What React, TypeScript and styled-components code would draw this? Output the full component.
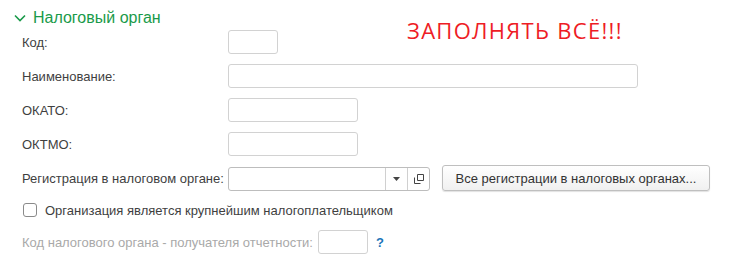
import styled, { createGlobalStyle } from 'styled-components';

const GlobalStyle = createGlobalStyle`
  body {
    margin: 0;
    background: #fff;
    font-family: 'Liberation Sans', Arial, sans-serif;
  }
`;

const Page = styled.div`
  position: relative;
  width: 739px;
  height: 265px;
  padding: 8px 0 0 14px;
  box-sizing: border-box;
`;

const GroupHeader = styled.div`
  display: flex;
  align-items: center;
  gap: 7px;
  height: 20px;
  color: #1a9a4a;
  font-size: 16px;
`;

const Note = styled.div`
  position: absolute;
  left: 407px;
  top: 15px;
  color: #ee1c25;
  font-family: 'Open Sans', sans-serif;
  font-size: 22px;
  letter-spacing: 1.3px;
`;

const Fields = styled.div`
  display: flex;
  flex-direction: column;
  gap: 10px;
  padding: 2px 0 0 8px;
`;

const Row = styled.div`
  display: flex;
  align-items: center;
  height: 24px;
`;

const Label = styled.div`
  width: 206px;
  flex-shrink: 0;
  font-size: 13px;
  color: #3f3f3f;
  white-space: nowrap;
`;

const Input = styled.div<{ $w: number }>`
  width: ${(p) => p.$w}px;
  height: 24px;
  box-sizing: border-box;
  border: 1px solid #d2d2d2;
  border-radius: 3px;
  background: #fff;
`;

const Combo = styled.div`
  display: flex;
  width: 202px;
  height: 24px;
  box-sizing: border-box;
  border: 1px solid #bdbdbd;
  border-radius: 3px;
  margin-top: 1px;
`;

const ComboText = styled.div`
  flex: 1;
`;

const ComboBtn = styled.div`
  width: 21px;
  display: flex;
  align-items: center;
  justify-content: center;
  border-left: 1px solid #d0d0d0;
`;

const Button = styled.div`
  margin-left: 12px;
  width: 268px;
  height: 26px;
  box-sizing: border-box;
  display: flex;
  align-items: center;
  justify-content: center;
  white-space: nowrap;
  border: 1px solid #bfbfbf;
  border-radius: 3px;
  background: linear-gradient(#ffffff, #f0f0f0);
  box-shadow: 0 1px 1px rgba(0, 0, 0, 0.12);
  font-size: 13px;
  color: #333;
`;

const CheckRow = styled.label`
  display: flex;
  align-items: center;
  gap: 8px;
  height: 24px;
  margin-top: -2px;
  padding-left: 1px;
  font-size: 13px;
  color: #3f3f3f;
`;

const Box = styled.span`
  width: 14px;
  height: 14px;
  box-sizing: border-box;
  border: 1px solid #8a8a8a;
  border-radius: 3px;
  background: #fff;
`;

const LastRow = styled.div`
  display: flex;
  align-items: center;
  gap: 5px;
  height: 24px;
  margin-top: -2px;
`;

const MutedText = styled.span`
  font-size: 13px;
  color: #a9a9a9;
`;

const Help = styled.span`
  margin-left: 3px;
  color: #1a74b9;
  font-weight: bold;
  font-size: 13px;
`;

export default function App() {
  return (
    <Page>
      <GlobalStyle />
      <GroupHeader>
        <svg width="12" height="8" viewBox="0 0 12 8">
          <path d="M1 1.5 L6 6.5 L11 1.5" fill="none" stroke="#1a9a4a" strokeWidth="1.6" />
        </svg>
        <span>Налоговый орган</span>
      </GroupHeader>
      <Note>ЗАПОЛНЯТЬ ВСЁ!!!</Note>
      <Fields>
        <Row>
          <Label>Код:</Label>
          <Input $w={50} />
        </Row>
        <Row>
          <Label>Наименование:</Label>
          <Input $w={410} />
        </Row>
        <Row>
          <Label>ОКАТО:</Label>
          <Input $w={130} />
        </Row>
        <Row>
          <Label>ОКТМО:</Label>
          <Input $w={130} />
        </Row>
        <Row>
          <Label>Регистрация в налоговом органе:</Label>
          <Combo>
            <ComboText />
            <ComboBtn>
              <svg width="7" height="4" viewBox="0 0 7 4">
                <path d="M0 0 H7 L3.5 4 Z" fill="#444" />
              </svg>
            </ComboBtn>
            <ComboBtn>
              <svg width="10" height="10" viewBox="0 0 10 10">
                <path d="M3.5 0.5 H9.5 V6.5 H3.5 Z M0.5 3.5 V9.5 H6.5" fill="none" stroke="#444" strokeWidth="1" />
              </svg>
            </ComboBtn>
          </Combo>
          <Button>Все регистрации в налоговых органах...</Button>
        </Row>
        <CheckRow>
          <Box />
          Организация является крупнейшим налогоплательщиком
        </CheckRow>
        <LastRow>
          <MutedText>Код налогового органа - получателя отчетности:</MutedText>
          <Input $w={50} />
          <Help>?</Help>
        </LastRow>
      </Fields>
    </Page>
  );
}
